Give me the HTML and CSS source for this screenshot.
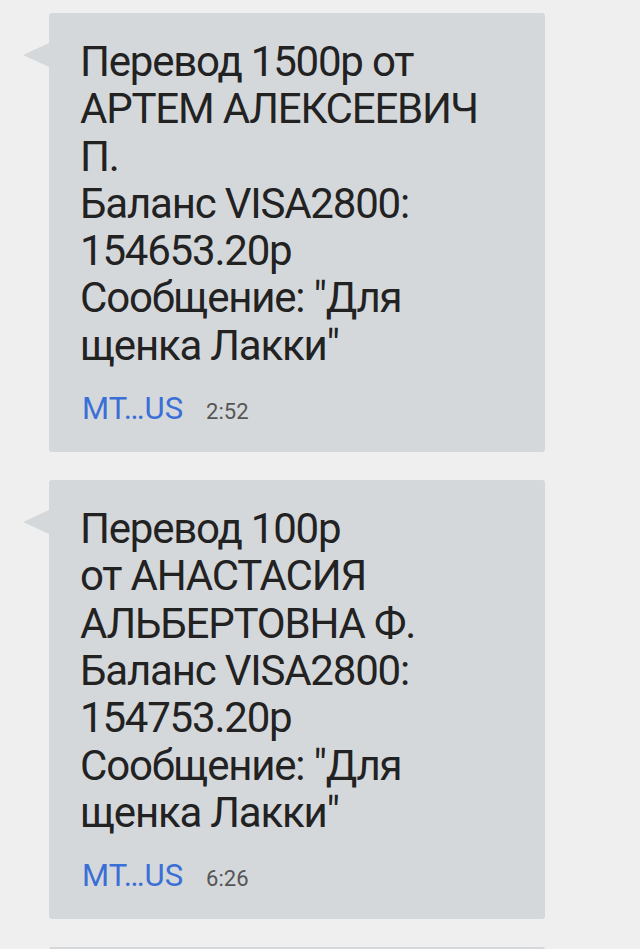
FILE: index.html
```html
<!DOCTYPE html>
<html lang="ru">
<head>
  <meta charset="UTF-8">
  <meta name="viewport" content="width=device-width, initial-scale=1.0">
  <title>Сообщения</title>
  <link rel="stylesheet" href="styles.css">
</head>
<body>

  <div class="thread">

    <div class="msg">
      <p class="msg-text">Перевод 1500р от<br>АРТЕМ АЛЕКСЕЕВИЧ<br>П.<br>Баланс VISA2800:<br>154653.20р<br>Сообщение: "Для<br>щенка Лакки"</p>
      <div class="msg-meta">
        <span class="sender">MT…US</span>
        <span class="time">2:52</span>
      </div>
    </div>

    <div class="msg">
      <p class="msg-text">Перевод 100р<br>от АНАСТАСИЯ<br>АЛЬБЕРТОВНА Ф.<br>Баланс VISA2800:<br>154753.20р<br>Сообщение: "Для<br>щенка Лакки"</p>
      <div class="msg-meta">
        <span class="sender">MT…US</span>
        <span class="time">6:26</span>
      </div>
    </div>

    <div class="msg"></div>

  </div>

</body>
</html>
```

FILE: styles.css
```css
body {
  margin: 0;
  background-color: #efefef;
  font-family: Roboto, "Noto Sans", sans-serif;
}
.thread {
  padding: 13px 0 0 49px;
  display: flex;
  flex-direction: column;
  gap: 28px;
}
.msg {
  position: relative;
  width: 496px;
  box-sizing: border-box;
  padding: 25px 20px 22px 31px;
  background-color: #d5d8db;
  border-radius: 3px;
}
.msg::before {
  content: "";
  position: absolute;
  left: -26px;
  top: 30px;
  border-style: solid;
  border-width: 12px 26px 12px 0;
  border-color: transparent #d5d8db transparent transparent;
}
.msg-text {
  margin: 0;
  font-size: 42px;
  line-height: 47.3px;
  letter-spacing: -1.2px;
  color: #222;
}
.msg-meta {
  display: flex;
  align-items: baseline;
  gap: 23px;
  margin-top: 22px;
  padding-left: 2px;
  line-height: 36px;
}
.sender {
  font-size: 31px;
  color: #3a6fd6;
}
.time {
  font-size: 22px;
  color: #555;
}
```
